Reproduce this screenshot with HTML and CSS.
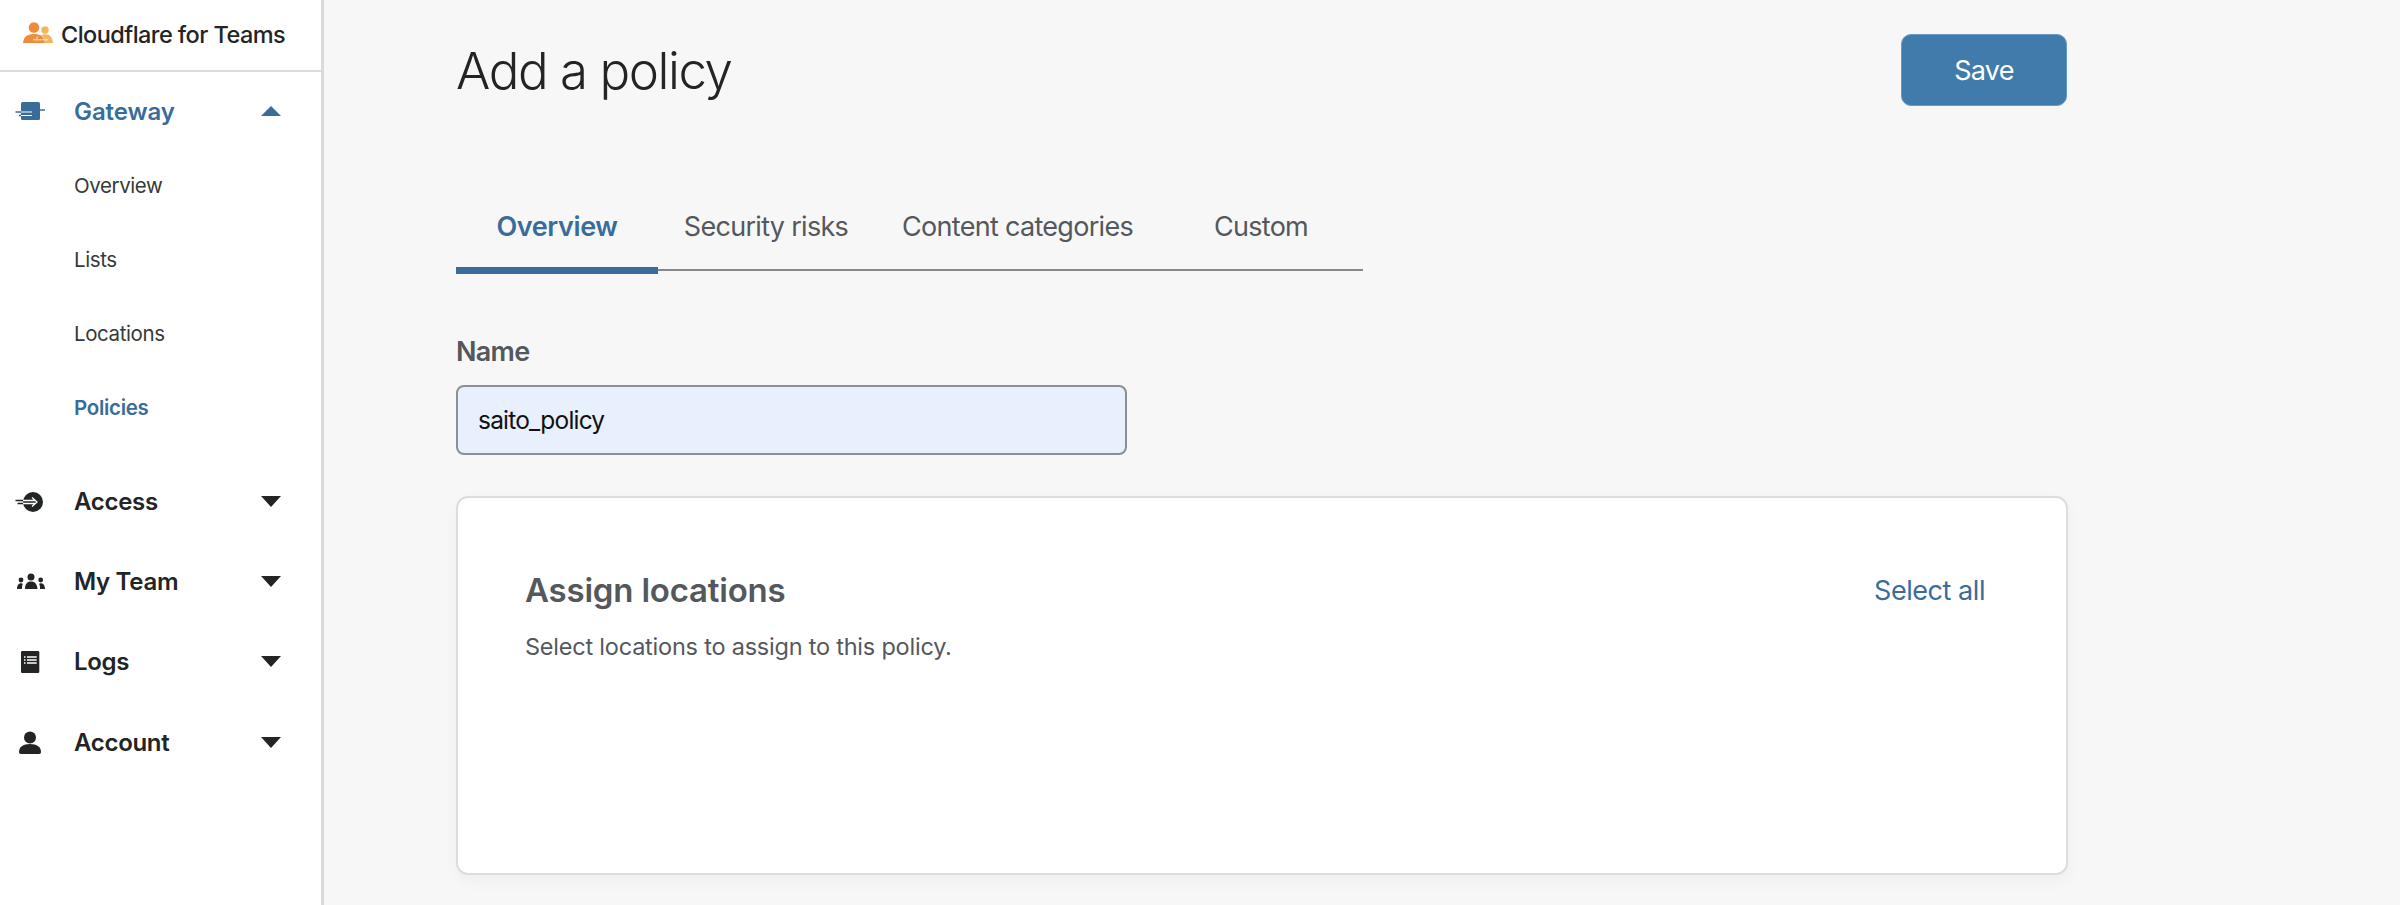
FILE: index.html
```html
<!DOCTYPE html>
<html lang="en">
<head>
<meta charset="utf-8">
<title>Add a policy</title>
<link rel="stylesheet" href="styles.css">
</head>
<body>
<div class="app">
  <aside class="sidebar">
    <div class="brand">
      <svg class="brand-icon" viewBox="0 0 30 21" width="30" height="21">
        <circle cx="11" cy="5.500" r="5.300" fill="#ee8c3a"/>
        <path d="M0 21c0-1 .5-3 1.500-5 2-3 5-4 9.500-4 3 0 5 .5 7 1.500 2 1.500 3.500 4 4 7.500z" fill="#ee8c3a"/>
        <circle cx="22" cy="8" r="3.700" fill="#f3b45e"/>
        <path d="M18.500 13.300c1-.8 2.200-1.100 3.700-1.100 4.800 0 7.300 3 7.800 8.800h-8c-.4-3.300-1.600-5.900-3.500-7.700z" fill="#f3b45e"/>
        <path d="M10 17.800h15M14 14.500v3" stroke="#fff" stroke-width=".8"/>
      </svg>
      <span class="brand-name">Cloudflare for Teams</span>
    </div>
    <nav class="nav">
      <div class="nav-item active">
        <svg class="nav-icon" viewBox="0 0 32 20"><rect x="7" y="1" width="19" height="18" rx="1.500" fill="#3a6c9b"/><path d="M26 9h5M1.500 11h6M5 14.500h3" stroke="#3a6c9b" stroke-width="1.500"/><path d="M7 11h11M7 14.500h11" stroke="#fff" stroke-width="1"/></svg>
        <span class="nav-label">Gateway</span>
        <span class="caret up"></span>
      </div>
      <ul class="subnav">
        <li>Overview</li>
        <li>Lists</li>
        <li>Locations</li>
        <li class="current">Policies</li>
      </ul>
      <div class="nav-item first-closed">
        <svg class="nav-icon" viewBox="0 0 32 22"><circle cx="19" cy="11" r="10" fill="#222426"/><path d="M1.500 9.500h9M3.500 12.500h7" fill="none" stroke="#222426" stroke-width="1.300"/><path d="M9 9.500h12M9 12.500h12M18 6.500l5 4.500-5 4.500" fill="none" stroke="#fff" stroke-width="1.300"/></svg>
        <span class="nav-label">Access</span>
        <span class="caret"></span>
      </div>
      <div class="nav-item">
        <svg class="nav-icon" viewBox="0 0 32 20"><circle cx="17" cy="5" r="3.500" fill="#222426"/><path d="M11 17c0-5 2-7.500 6-7.500s6 2.500 6.500 7.500z" fill="#222426"/><circle cx="7" cy="8" r="2.400" fill="#222426"/><circle cx="26.700" cy="8" r="2.400" fill="#222426"/><path d="M3 17c0-3.500 1.500-5.800 4-5.800.8 0 1.300.2 1.800.5-.6 1.500-.9 3.300-.9 5.300zM31 17c0-3.500-1.500-5.800-4-5.800-.8 0-1.300.2-1.800.5.600 1.500.9 3.300.9 5.300z" fill="#222426"/></svg>
        <span class="nav-label">My Team</span>
        <span class="caret"></span>
      </div>
      <div class="nav-item">
        <svg class="nav-icon" viewBox="0 0 32 22"><rect x="7" y="0" width="18.300" height="22" rx="1.200" fill="#222426"/><path d="M13 6h9.700M13 9h9.700M13 12h9.700M10 6h1.500M10 9h1.500M10 12h1.500" stroke="#fff" stroke-width="1.300"/></svg>
        <span class="nav-label">Logs</span>
        <span class="caret"></span>
      </div>
      <div class="nav-item">
        <svg class="nav-icon" viewBox="0 0 32 24"><circle cx="16" cy="7.500" r="6" fill="#222426"/><path d="M5 22c0-5 4-8 11-8s11 3 11 8c0 1.300-.7 2-2 2H7c-1.300 0-2-.7-2-2z" fill="#222426"/></svg>
        <span class="nav-label">Account</span>
        <span class="caret"></span>
      </div>
    </nav>
  </aside>
  <main class="main">
    <header class="page-head">
      <h1 class="title">Add a policy</h1>
      <button class="save" type="button">Save</button>
    </header>
    <div class="tabs">
      <div class="tab on">Overview</div>
      <div class="tab">Security risks</div>
      <div class="tab">Content categories</div>
      <div class="tab">Custom</div>
    </div>
    <label class="field-label" for="name">Name</label>
    <input class="field" id="name" type="text" value="saito_policy">
    <section class="card">
      <div class="card-head">
        <h2 class="card-title">Assign locations</h2>
        <a class="select-all">Select all</a>
      </div>
      <p class="card-desc">Select locations to assign to this policy.</p>
    </section>
  </main>
</div>
</body>
</html>
```
FILE: styles.css
```css
* { box-sizing: border-box; }
html, body { margin: 0; padding: 0; height: 100%; }
body { font-family: Inter, "Liberation Sans", sans-serif; background: #f7f7f7; overflow: hidden; }
.app { display: flex; height: 905px; }
.sidebar { width: 324px; flex: none; background: #fff; border-right: 3px solid #d9dadb; }
.brand { height: 71.500px; display: flex; align-items: center; padding-left: 23px; gap: 8px; border-bottom: 2px solid #dcdcdc; }
.brand-icon { flex: none; margin-top: -5px; }
.brand-name { font-size: 23.500px; font-weight: 500; color: #222426; letter-spacing: -.55px; }
.nav { display: flex; flex-direction: column; }
.nav-item { height: 80.200px; display: flex; align-items: center; color: #222426; }
.nav-item.active { height: 79px; color: #3a6c9b; }
.nav-item.first-closed { margin-top: 16.500px; }
.nav-icon { width: 32px; height: 24px; margin-left: 14px; flex: none; }
.nav-label { margin-left: 28px; font-size: 24px; font-weight: 600; flex: 1; letter-spacing: -.3px; }
.active .nav-label { letter-spacing: -.1px; }
.caret { width: 0; height: 0; margin-right: 40px; border-left: 10.500px solid transparent; border-right: 10.500px solid transparent; border-top: 11px solid #222426; }
.caret.up { border-top: 0; border-left-width: 10px; border-right-width: 10px; border-bottom: 10px solid #3a6c9b; }
.subnav { list-style: none; margin: -1.500px 0 0; padding: 0; }
.subnav li { height: 74px; line-height: 74px; padding-left: 74px; font-size: 20.500px; letter-spacing: -.4px; color: #36393a; }
.subnav li.current { color: #3a6c9b; font-weight: 600; letter-spacing: -.3px; }
.main { flex: 1; padding-left: 132px; }
.page-head { width: 1611px; display: flex; justify-content: space-between; align-items: flex-start; padding-top: 34px; height: 106px; }
.title { margin: 6px 0 0; font-size: 51px; line-height: 62px; font-weight: 300; letter-spacing: -1.450px; color: #222426; }
.save { width: 166px; height: 72px; background: #417bac; border: 1px solid #6a9ac2; border-radius: 10px; color: #fff; font: 400 27px Inter, "Liberation Sans", sans-serif; letter-spacing: -.7px; }
.tabs { width: 907px; margin-top: 80px; display: grid; grid-template-columns: 202px 216px 287px 200px; border-bottom: 2px solid #85888c; height: 85px; }
.tab { height: 85px; text-align: center; padding-top: 21px; font-size: 27px; line-height: 40px; letter-spacing: -.7px; color: #54585c; }
.tab.on { color: #3a6c9b; font-weight: 600; letter-spacing: -.4px; border-bottom: 7px solid #3a6c9b; height: 88px; }
.field-label { display: block; margin-top: 63px; font-size: 27px; line-height: 36px; font-weight: 600; letter-spacing: -.7px; color: #54585c; }
.field { display: block; width: 671px; height: 70px; margin-top: 15px; padding: 0 20px; background: #e8f0fe; border: 2px solid #8a8f96; border-radius: 8px; font: 400 24.500px Inter, "Liberation Sans", sans-serif; letter-spacing: -.8px; color: #111; }
.card { width: 1612px; height: 379px; margin-top: 41px; padding: 71px 81px 0 67px; background: #fff; border: 2px solid #dcdddd; border-radius: 12px; box-shadow: 0 6px 16px rgba(0,0,0,.04); }
.card-head { display: flex; justify-content: space-between; align-items: center; }
.card-title { margin: 0; font-size: 33px; line-height: 42px; font-weight: 600; letter-spacing: -.2px; color: #54585c; }
.select-all { font-size: 27px; letter-spacing: -.45px; color: #3a6c9b; }
.card-desc { margin: 19.500px 0 0; font-size: 23.500px; line-height: 32px; letter-spacing: -.22px; color: #54585c; }
```
